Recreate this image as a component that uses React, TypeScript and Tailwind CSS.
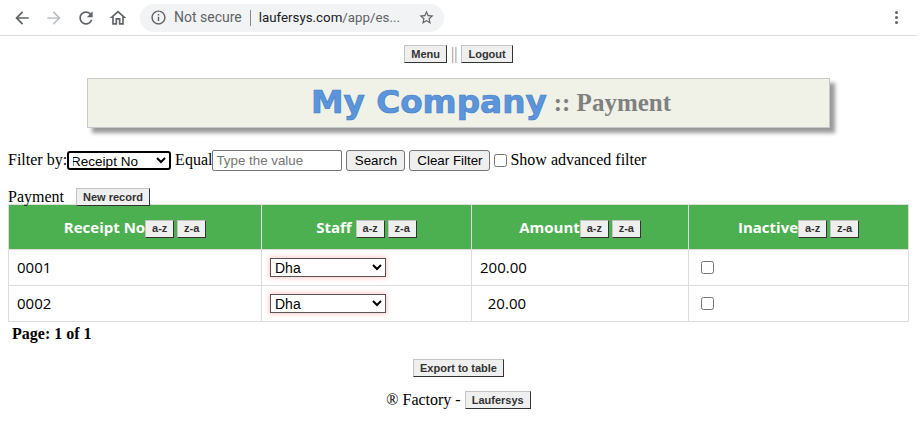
import React from "react";

const serif = "font-['Liberation_Serif',serif]";

function Icon({ d, className = "" }: { d: string; className?: string }) {
  return (
    <svg viewBox="0 0 24 24" fill="currentColor" className={className}>
      <path d={d} />
    </svg>
  );
}

function Btn({ children, className = "" }: { children: React.ReactNode; className?: string }) {
  return (
    <button className={`h-[18px] px-[6px] bg-[#efefef] border border-solid border-t-[#c4c4c4] border-l-[#c4c4c4] border-r-[#333] border-b-[#333] text-[11px] leading-none font-bold text-[#333] font-['Liberation_Sans',sans-serif] align-middle ${className}`}>
      {children}
    </button>
  );
}

function Sort({ name }: { name: string }) {
  return (
    <th className="border border-[#ddd] bg-[#4caf50] text-white text-[15px] font-bold h-[45px] p-0 text-center font-['Open_Sans',sans-serif]">
      {name}
      <SortBtns gap={name === "Staff"} />
    </th>
  );
}

function SortBtns({ gap }: { gap: boolean }) {
  return (
    <span className={`inline-flex gap-[3px] align-middle ${gap ? "ml-[4px]" : ""}`}>
      <Btn className="w-[29px] !px-0">a-z</Btn>
      <Btn className="w-[29px] !px-0">z-a</Btn>
    </span>
  );
}

function Row({ no, amount }: { no: string; amount: string }) {
  return (
    <tr className="h-[36px] text-[15px] text-black font-['Open_Sans',sans-serif]">
      <td className="border border-[#ddd] pl-[8px]">{no}</td>
      <td className="border border-[#ddd] pl-[8px]">
        <select className="block w-[116px] h-[19px] bg-white text-[14px] leading-none border border-[#555] shadow-[0_0_5px_1px_#ffc8c8] font-['Liberation_Sans',sans-serif]">
          <option>Dha</option>
        </select>
      </td>
      <td className="border border-[#ddd] pl-[8px] whitespace-pre">{amount}</td>
      <td className="border border-[#ddd] pl-[12px]">
        <input type="checkbox" className="block w-[13px] h-[13px]" />
      </td>
    </tr>
  );
}

export default function App() {
  return (
    <div className={`w-[922px] h-[430px] bg-white overflow-hidden text-black text-[16px] ${serif}`}>
      <div className="w-[917px]">
        {/* browser toolbar */}
        <div className="h-[36px] border-b border-[#dadce0] flex items-center relative">
          <div className="flex items-center gap-[8px] pl-[12px] text-[#5f6368]">
            <Icon className="w-[20px] h-[20px]" d="M20 11H7.83l5.59-5.59L12 4l-8 8 8 8 1.41-1.41L7.83 13H20v-2z" />
            <Icon className="w-[20px] h-[20px] mx-[4px] text-[#bdc1c6]" d="M12 4l-1.41 1.41L16.17 11H4v2h12.17l-5.58 5.59L12 20l8-8z" />
            <Icon className="w-[20px] h-[20px]" d="M17.65 6.35C16.2 4.9 14.21 4 12 4c-4.42 0-7.99 3.58-7.99 8s3.57 8 7.99 8c3.73 0 6.84-2.55 7.73-6h-2.08c-.82 2.33-3.04 4-5.65 4-3.31 0-6-2.69-6-6s2.69-6 6-6c1.66 0 3.14.69 4.22 1.78L13 11h7V4l-2.35 2.35z" />
            <Icon className="w-[20px] h-[20px] ml-[4px]" d="M12 5.69l5 4.5V18h-2v-6H9v6H7v-7.81l5-4.5M12 3L2 12h3v8h6v-6h2v6h6v-8h3L12 3z" />
          </div>
          <div className="ml-[12px] w-[304px] h-[28px] rounded-full bg-[#f1f3f4] flex items-center pl-[10px] text-[14px] font-['Roboto',sans-serif]">
            <Icon className="w-[17px] h-[17px] text-[#5f6368]" d="M11 7h2v2h-2zm0 4h2v6h-2zm1-9C6.48 2 2 6.48 2 12s4.48 10 10 10 10-4.48 10-10S17.52 2 12 2zm0 18c-4.41 0-8-3.59-8-8s3.59-8 8-8 8 3.59 8 8-3.59 8-8 8z" />
            <span className="ml-[7px] text-[#5f6368]">Not secure</span>
            <span className="mx-[8px] w-px h-[16px] bg-[#80868b]" />
            <span className="text-[13.3px] text-[#5f6368]"><span className="text-[#202124]">laufersys.com</span>/app/es...</span>
            <Icon className="w-[17px] h-[17px] ml-[18px] text-[#5f6368]" d="M22 9.24l-7.19-.62L12 2 9.19 8.63 2 9.24l5.46 4.73L5.82 21 12 17.27 18.18 21l-1.63-7.03L22 9.24zM12 15.4l-3.76 2.27 1-4.28-3.32-2.88 4.38-.38L12 6.1l1.71 4.04 4.38.38-3.32 2.88 1 4.28L12 15.4z" />
          </div>
          <div className="ml-auto mr-[19px] flex flex-col gap-[2px]">
            <span className="w-[3px] h-[3px] rounded-full bg-[#5f6368]" />
            <span className="w-[3px] h-[3px] rounded-full bg-[#5f6368]" />
            <span className="w-[3px] h-[3px] rounded-full bg-[#5f6368]" />
          </div>
        </div>

        {/* page nav */}
        <div className="flex justify-center items-center mt-[9px] h-[18px]">
          <Btn>Menu</Btn>
          <span className="mx-[4px] text-[#888] text-[16px] leading-none">||</span>
          <Btn>Logout</Btn>
        </div>

        {/* banner */}
        <div className="mx-[87px] mt-[15px] h-[50px] bg-[#f0f2e8] border border-[#c8c8c8] shadow-[5px_5px_4px_#999] flex items-center justify-center pl-[65px]">
          <span className="font-['DejaVu_Sans',sans-serif] font-bold text-[32.7px] text-[#5b95dc] [-webkit-text-stroke:0.7px_#4a7fc4]">My Company</span>
          <span className="ml-[7px] font-bold text-[25px] text-[#808080]">:: Payment</span>
        </div>

        {/* filter */}
        <div className="flex items-center h-[22px] mt-[21px] px-[8px]">
          <span>Filter by:</span>
          <select className="w-[104px] h-[19px] bg-white border-2 border-black rounded-[3px] text-[13.5px] [text-indent:-2px] font-['Liberation_Sans',sans-serif]">
            <option>Receipt No</option>
          </select>
          <span className="ml-[4px]">Equal</span>
          <input placeholder="Type the value" className="w-[130px] h-[21px] px-[3px] border border-[#767676] rounded-[2px] text-[13.33px] font-['Liberation_Sans',sans-serif] placeholder:text-[#757575]" />
          <button className="ml-[4px] h-[21px] w-[59px] bg-[#efefef] border border-[#767676] rounded-[3px] text-[13.33px] font-['Liberation_Sans',sans-serif]">Search</button>
          <button className="ml-[4px] h-[21px] w-[81px] bg-[#efefef] border border-[#767676] rounded-[3px] text-[13.33px] font-['Liberation_Sans',sans-serif]">Clear Filter</button>
          <input type="checkbox" className="ml-[4px] w-[13px] h-[13px]" />
          <span className="ml-[3px]">Show advanced filter</span>
        </div>

        {/* table caption */}
        <div className="flex items-center px-[8px] mt-[17px] h-[18px]">
          <span>Payment</span>
          <Btn className="ml-[12px]">New record</Btn>
        </div>

        <div className="px-[8px] -mt-[2px]">
          <table className="w-[900px] table-fixed border-collapse">
            <colgroup>
              <col className="w-[253px]" />
              <col className="w-[210px]" />
              <col className="w-[217px]" />
              <col className="w-[220px]" />
            </colgroup>
            <thead>
              <tr>
                <Sort name="Receipt No" />
                <Sort name="Staff" />
                <Sort name="Amount" />
                <Sort name="Inactive" />
              </tr>
            </thead>
            <tbody>
              <Row no="0001" amount="200.00" />
              <Row no="0002" amount="  20.00" />
            </tbody>
          </table>
        </div>

        <div className="px-[12px] mt-[3px] font-bold leading-[18px]">Page: 1 of 1</div>

        <div className="flex justify-center mt-[16px]">
          <Btn>Export to table</Btn>
        </div>
        <div className="flex justify-center items-center mt-[13px] h-[20px]">
          <span>® Factory -</span>
          <Btn className="ml-[4px]">Laufersys</Btn>
        </div>
      </div>
    </div>
  );
}
